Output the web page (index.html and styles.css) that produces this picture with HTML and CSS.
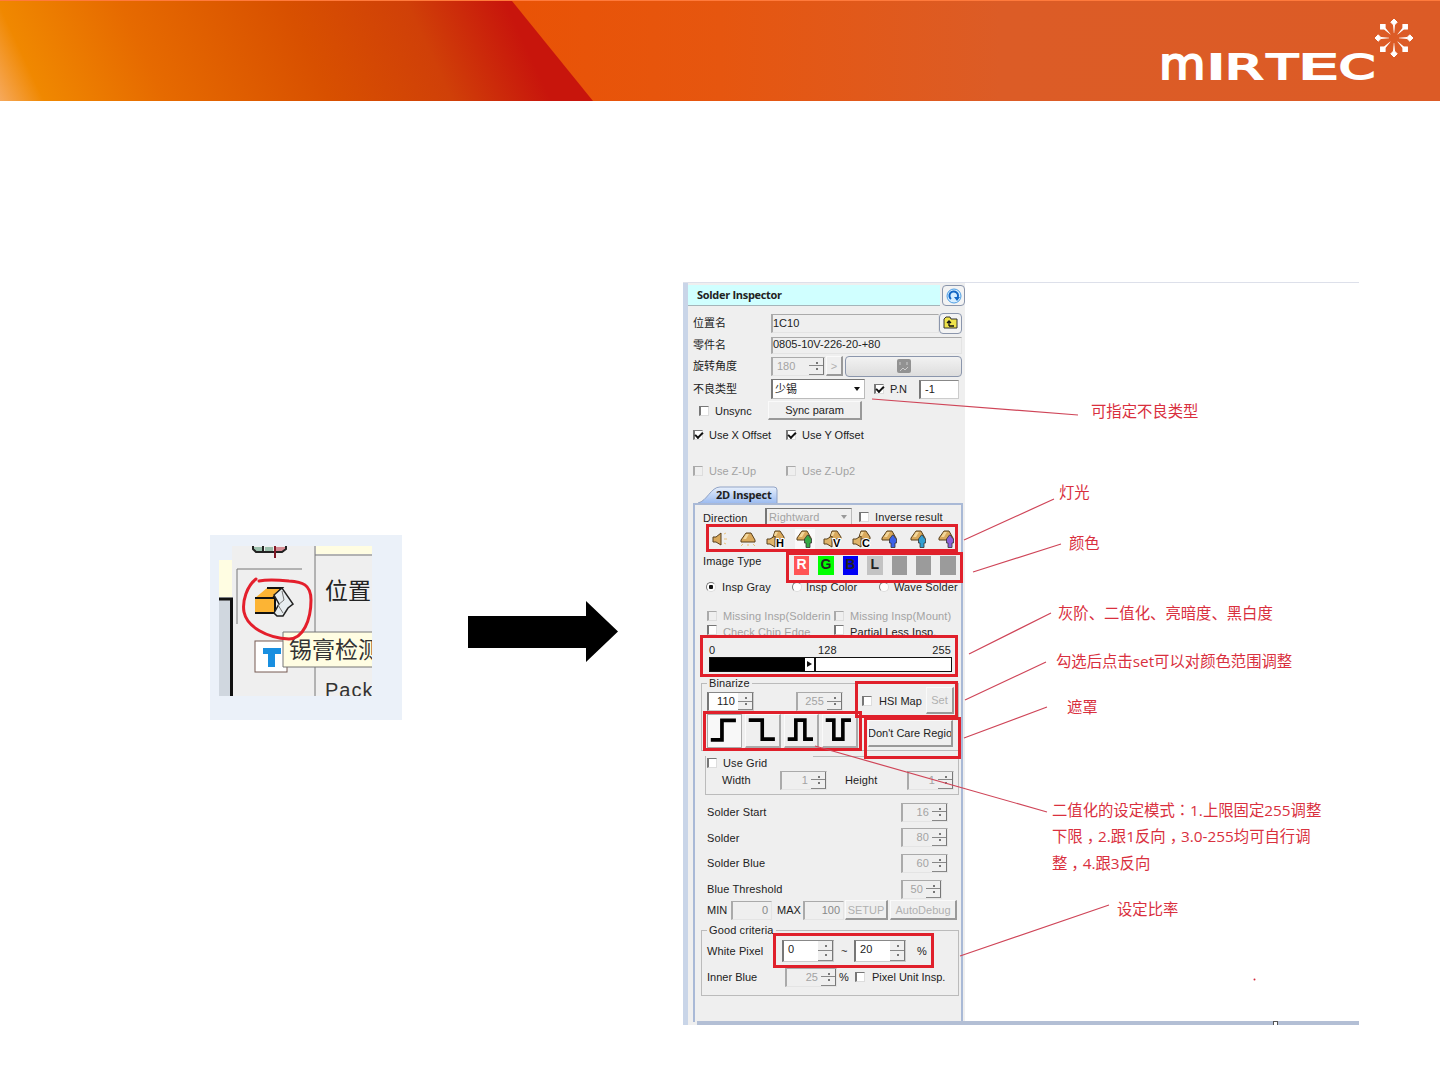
FILE: index.html
```html
<!DOCTYPE html>
<html lang="zh">
<head>
    <meta charset="UTF-8">
    <title>MIRTEC - Solder Inspector</title>
    <link rel="stylesheet" href="styles.css">
</head>
<body>
    <svg class="defs" width="0" height="0">
        <symbol id="lamp" viewBox="0 0 20 20">
            <path d="M8 4h5l4 7v2H3v-2z" fill="#d9a95c" stroke="#59401c"/>
            <path d="M8 5h3l-3 5H5z" fill="#f3d79b"/>
        </symbol>
        <symbol id="lamp-pair" viewBox="0 0 20 20">
            <path d="M9 2h5l4 6v2H7V8z" fill="#d9a95c" stroke="#59401c"/>
            <path d="M9 7v11l-5-3H1v-5h3z" fill="#e0b56a" stroke="#59401c"/>
            <path d="M9 3h3l-2 4H8z" fill="#f3d79b"/>
        </symbol>
        <symbol id="man" viewBox="0 0 20 20">
            <path d="M7 2h5l4 7v2H2V9z" fill="#d9a95c" stroke="#59401c"/>
            <path d="M7 3h3L7 8H4z" fill="#f3d79b"/>
            <path d="M12.500 6a2 2 0 0 1 2 2l2 2v4h-1.500v4.500h-4V14H9.500v-4l1.500-2z" stroke="#333" stroke-width=".8"/>
        </symbol>
    </svg>

    <header class="banner">
        <svg class="logo" width="260" height="80" viewBox="0 0 260 80">
            <text class="logo-text" y="66" font-size="34"><tspan x="-1" font-size="45" textLength="46.500" lengthAdjust="spacingAndGlyphs">m</tspan><tspan x="46.500" textLength="19" lengthAdjust="spacingAndGlyphs">I</tspan><tspan x="65" textLength="38" lengthAdjust="spacingAndGlyphs">R</tspan><tspan x="107" textLength="30.700" lengthAdjust="spacingAndGlyphs">T</tspan><tspan x="138.500" textLength="40" lengthAdjust="spacingAndGlyphs">E</tspan><tspan x="179" textLength="36" lengthAdjust="spacingAndGlyphs">C</tspan></text>
            <g fill="#fff" stroke="#fff">
                <g id="ray"><path d="M234 6l3.200 3.200-3.200 3.200-3.200-3.200z"/><path d="M233 12h2l-.8 8h-.4z" stroke="none"/></g>
                <use href="#ray" transform="rotate(45 234 25)"/>
                <use href="#ray" transform="rotate(90 234 25)"/>
                <use href="#ray" transform="rotate(135 234 25)"/>
                <use href="#ray" transform="rotate(180 234 25)"/>
                <use href="#ray" transform="rotate(225 234 25)"/>
                <use href="#ray" transform="rotate(270 234 25)"/>
                <use href="#ray" transform="rotate(315 234 25)"/>
            </g>
        </svg>
    </header>

    <main class="slide">
        <!-- toolbar close-up -->
        <svg class="closeup" width="192" height="185" viewBox="0 0 192 185">
            <rect width="192" height="185" fill="#ebf1f9"/>
            <rect x="22" y="11" width="140" height="150" fill="#efefef"/>
            <rect x="9" y="25" width="13" height="37" fill="#fffde2"/>
            <rect x="9" y="64" width="13" height="97" fill="#d0d7df"/>
            <path d="M9 64h12.500v97" fill="none" stroke="#111" stroke-width="3"/>
            <path d="M27 89V34h65M105 11v150" fill="none" stroke="#777"/>
            <rect x="106" y="11" width="56" height="8" fill="#fffde2"/>
            <path d="M105 20h57" stroke="#777"/>
            <path d="M44 12v4h10v-4zM55 12v4h8v-4z" fill="#9bc0ad"/>
            <path d="M64 12h11v4H64z" fill="#d58b94"/>
            <path d="M43 11v3l3 3h26l4-3v-3M53 11v6" fill="none" stroke="#222" stroke-width="2"/>
            <path d="M65 11v12" stroke="#801725" stroke-width="2"/>
            <path d="M45 63l12-10h16l-8 10v16H45z" fill="#fcb434"/>
            <path d="M45 63h20v15M57 53h15l-9 10M45 78h20" fill="none" stroke="#111" stroke-width="2"/>
            <path d="M64 60l8-7 11 16-5 4-5 8h-6l-3-3 5-9z" fill="#e7edf0" stroke="#222" stroke-width="1.500"/>
            <path d="M72 56l2 9-6 5 5 8" fill="none" stroke="#777"/>
            <rect x="45" y="106" width="32" height="31" fill="#fff" stroke="#765a52"/>
            <path d="M53 113h18v6h-6v13h-7v-13h-5z" fill="#198fe0"/>
            <rect x="73" y="97" width="89" height="35" fill="#fffde2"/>
            <path d="M162 97H73v35h89" fill="none" stroke="#777"/>
            <svg x="0" y="0" width="162" height="161">
                <text x="115" y="64" font-size="23" fill="#222">位置</text>
                <text x="79" y="123" font-size="23" fill="#333">锡膏检测</text>
                <text x="115" y="162" font-size="20" letter-spacing="1" fill="#333">Pack</text>
            </svg>
            <path d="M46 44c-9 7-14 22-12 33 3 15 23 26 45 27 14 0 22-19 22-39 0-16-9-18-22-19-10-1-20-2-30 0" fill="none" stroke="#e41f2c" stroke-width="3" stroke-linecap="round"/>
        </svg>

        <svg class="arrow" width="151" height="61" viewBox="0 0 151 61">
            <path d="M1 15h118V0l32 30.500L119 61V47H1z"/>
        </svg>

        <section class="figure">
            <div class="panel">
                <div class="title-row">
                    <div class="title">Solder Inspector</div>
                    <button class="round-btn">
                        <svg width="16" height="16" viewBox="0 0 16 16"><circle cx="8" cy="8" r="7" fill="#d6edff" stroke="#4c9de4"/><path d="M5 11a4.300 4.300 0 1 1 6-.5" fill="none" stroke="#1467c5" stroke-width="2"/><path d="M8 9h6l-3 4z" fill="#1467c5"/></svg>
                    </button>
                </div>
                <div class="row name-row">
                    <span>位置名</span><span class="field">1C10</span>
                    <button class="round-btn">
                        <svg width="16" height="14" viewBox="0 0 16 14"><path d="M1 3l2-2h4l1 2h6v9H1z" fill="#efe34b" stroke="#333"/><path d="M6 10h5M6 10V5M4 7l2-2 2 2" fill="none" stroke="#111" stroke-width="1.300"/></svg>
                    </button>
                </div>
                <div class="row part-row"><span>零件名</span><span class="field">0805-10V-226-20-+80</span></div>
                <div class="row angle-row">
                    <span>旋转角度</span><span class="spin off left">180<i></i></span><button class="btn off">&gt;</button>
                    <button class="round-btn wide">
                        <svg width="14" height="14" viewBox="0 0 14 14"><rect width="14" height="14" rx="2" fill="#929292"/><path d="M3 3v3M10 3v3M3 12l3-3 2 2 3-3" stroke="#ccc" fill="none"/></svg>
                    </button>
                </div>
                <div class="row type-row">
                    <span>不良类型</span><span class="select">少锡<b></b></span>
                    <span class="check on"></span><span>P.N</span><span class="field white">-1</span>
                </div>
                <div class="row sync-row"><span class="check"></span><span>Unsync</span><button class="btn">Sync param</button></div>
                <div class="row offset-row"><span class="check on"></span><span>Use X Offset</span><span class="check on"></span><span>Use Y Offset</span></div>
                <div class="row offset-row zup off"><span class="check"></span><span>Use Z-Up</span><span class="check"></span><span>Use Z-Up2</span></div>

                <div class="tab">
                    <svg width="80" height="17" viewBox="0 0 80 17"><defs><linearGradient id="tabfill" x2="0" y2="1"><stop stop-color="#e8f0fc"/><stop offset="1" stop-color="#9dbcf0"/></linearGradient></defs><path d="M0 17C9 15 13 1 22 1h54q3 0 3 3v13" fill="url(#tabfill)" stroke="#91a3c5"/></svg>
                    <span>2D Inspect</span>
                </div>
                <div class="tab-body">
                    <div class="row dir-row">
                        <span class="dir">Direction</span><span class="select off">Rightward<b></b></span><span class="check"></span><span>Inverse result</span>
                    </div>
                    <div class="mark lights">
                        <svg viewBox="0 0 20 20"><path d="M12 4v12l-5-3H4V8h3z" fill="#d9a95c" stroke="#59401c"/><path d="M15 5l2-1M15 10h3M15 14l2 1" stroke="#e7c07c"/></svg>
                        <svg viewBox="0 0 20 20"><use href="#lamp"/><path d="M5 15l-2 2M10 15v2M15 15l2 2" stroke="#e7c07c"/></svg>
                        <svg viewBox="0 0 20 20"><use href="#lamp-pair"/><text x="10" y="18">H</text></svg>
                        <svg class="pressed" viewBox="0 0 20 20"><use href="#man" fill="#36a844"/></svg>
                        <svg viewBox="0 0 20 20"><use href="#lamp-pair"/><text x="10" y="18">V</text></svg>
                        <svg viewBox="0 0 20 20"><use href="#lamp-pair"/><text x="10" y="18">C</text></svg>
                        <svg viewBox="0 0 20 20"><use href="#man" fill="#3c62e8"/></svg>
                        <svg viewBox="0 0 20 20"><use href="#man" fill="#339ed0"/></svg>
                        <svg viewBox="0 0 20 20"><use href="#man" fill="#8a62d8"/></svg>
                    </div>
                    <div class="image-row">
                        <span>Image Type</span>
                        <div class="mark swatches">
                            <b class="r">R</b><b class="g">G</b><b class="b">B</b><b class="l">L</b><b></b><b></b><b></b>
                        </div>
                    </div>
                    <div class="row radio-row">
                        <span class="radio on"></span><span>Insp Gray</span><span class="radio"></span><span>Insp Color</span><span class="radio"></span><span>Wave Solder</span>
                    </div>
                    <div class="row opt-row off"><span class="check"></span><span class="clip">Missing Insp(Solderin</span><span class="check"></span><span>Missing Insp(Mount)</span></div>
                    <div class="row opt-row cut"><span class="check"></span><span class="off">Check Chip Edge</span><span class="check"></span><span>Partial Less Insp.</span></div>
                    <div class="mark slider">
                        <div class="scale"><span>0</span><span class="mid-tick">128</span><span>255</span></div>
                        <div class="bar"><i></i><b></b></div>
                    </div>

                    <div class="group binarize">
                        <span class="legend">Binarize</span>
                        <div class="bin-left">
                            <div class="bin-spins"><span class="spin white">110<i></i></span><span class="spin off">255<i></i></span></div>
                            <div class="mark modes">
                                <svg class="pressed" viewBox="0 0 36 33"><path d="M3 26h12V5h15"/></svg>
                                <svg viewBox="0 0 36 33"><path d="M3 5h15v21h14"/></svg>
                                <svg viewBox="0 0 36 33"><path d="M3 26h9V5h10v21h9"/></svg>
                                <svg viewBox="0 0 36 33"><path d="M3 5h9v21h10V5h9"/></svg>
                            </div>
                        </div>
                        <div class="bin-right">
                            <div class="mark hsi"><span class="check"></span><span>HSI Map</span><button class="btn off">Set</button></div>
                            <div class="mark care"><button class="btn"><span>Don't Care Regio</span></button></div>
                        </div>
                    </div>

                    <div class="group use-grid">
                        <div class="row ug-head"><span class="check"></span><span>Use Grid</span></div>
                        <div class="row ug-size"><span>Width</span><span class="spin off">1<i></i></span><span>Height</span><span class="spin off">1<i></i></span></div>
                    </div>

                    <div class="row solder-row"><span>Solder Start</span><span class="spin off">16<i></i></span></div>
                    <div class="row solder-row"><span>Solder</span><span class="spin off">80<i></i></span></div>
                    <div class="row solder-row"><span>Solder Blue</span><span class="spin off">60<i></i></span></div>
                    <div class="row solder-row narrow"><span>Blue Threshold</span><span class="spin off">50<i></i></span></div>
                    <div class="row min-row">
                        <span>MIN</span><span class="field num">0</span><span>MAX</span><span class="field num">100</span>
                        <button class="btn off">SETUP</button><button class="btn off">AutoDebug</button>
                    </div>

                    <div class="group good">
                        <span class="legend">Good criteria</span>
                        <div class="white-row">
                            <span>White Pixel</span>
                            <div class="mark range">
                                <span class="spin white left">0<i></i></span><span>~</span><span class="spin white left">20<i></i></span><span>%</span>
                            </div>
                        </div>
                        <div class="row inner-row"><span>Inner Blue</span><span class="spin off">25<i></i></span><span>%</span><span class="check"></span><span>Pixel Unit Insp.</span></div>
                    </div>
                </div>
            </div>
            <div class="bottom-strip"><i></i></div>

            <!-- leader lines -->
            <svg class="leaders" width="676" height="743" viewBox="683 282 676 743">
                <path d="M872 399L1078 415M964 540L1054 499M973 572L1061 544M969 654L1051 613M965 700L1046 662M964 738L1047 707M815 746L1047 812M960 956L1109 905"/>
                <circle cx="1254.500" cy="979.500" r="1"/>
            </svg>
            <p class="note n1">可指定不良类型</p>
            <p class="note n2">灯光</p>
            <p class="note n3">颜色</p>
            <p class="note n4">灰阶、二值化、亮暗度、黑白度</p>
            <p class="note n5">勾选后点击set可以对颜色范围调整</p>
            <p class="note n6">遮罩</p>
            <p class="note n7">二值化的设定模式<span class="colon" lang="zh-TW">：</span>1.上限固定255调整<br>下限<span class="comma">，</span>2.跟1反向<span class="comma">，</span>3.0-255均可自行调<br>整<span class="comma">，</span>4.跟3反向</p>
            <p class="note n8">设定比率</p>
        </section>
    </main>
</body>
</html>
```
FILE: styles.css
```css
* {
    box-sizing: border-box;
}
body {
    margin: 0;
    width: 1440px;
    height: 1080px;
    overflow: hidden;
    background: #fff;
    font-family: "Liberation Sans", "Noto Sans CJK SC", sans-serif;
    color: #222;
}
.defs {
    position: absolute;
}

/* banner */
.banner {
    height: 101px;
    display: flex;
    justify-content: flex-end;
    position: relative;
    border-top: 1px solid #ff7a3c;
    background: linear-gradient(90deg, #e95306 520px, #e6560f 720px, #dc5c26 1000px, #dc5b26);
}
.banner::before {
    content: "";
    position: absolute;
    top: 0;
    left: 0;
    width: 593px;
    height: 100px;
    clip-path: polygon(0 0, 512px 0, 593px 100%, 0 100%);
    background:
        linear-gradient(65deg, #f6a95c 0, rgba(242, 145, 30, 0) 40px),
        linear-gradient(65deg, #f08800 40px, #e66a00 150px, #d85000 300px, #d04008 410px, #c8150c 500px);
}
.logo {
    margin: 12px 20px 0 0;
    overflow: visible;
}
.logo-text {
    fill: #fff;
    stroke: #fff;
    stroke-width: 2px;
    font-family: "DejaVu Sans", sans-serif;
}

.slide {
    display: flex;
    align-items: flex-start;
}
.closeup {
    margin: 434px 0 0 210px;
}
.arrow {
    margin: 500px 0 0 65px;
}
.figure {
    position: relative;
    margin: 181px 0 0 65px;
    width: 676px;
    height: 743px;
    border-top: 1px solid #dde0ea;
    font-size: 11px;
    line-height: 14px;
}

/* inspector panel */
.panel {
    width: 282px;
    height: 742px;
    padding: 2px 0 0 5px;
    background: #efefef;
    border-left: 5px solid #c9d5e8;
    white-space: nowrap;
}
.title-row {
    display: flex;
    gap: 2px;
    height: 21px;
    margin: 0 0 6px -5px;
}
.title {
    width: 253px;
    padding: 3px 9px;
    background: #d0ffff;
    border-bottom: 1px solid #a5b5ba;
    font-family: "Open Sans", sans-serif;
    font-size: 11px;
    font-weight: bold;
    letter-spacing: -.3px;
}
.row {
    display: grid;
    align-items: center;
}
.name-row {
    grid-template-columns: 78px 168px 24px;
    height: 22px;
    margin-bottom: 1px;
}
.part-row {
    grid-template-columns: 78px 191px;
    height: 20px;
}
.angle-row {
    grid-template-columns: 78px 55px 19px 117px;
    height: 22px;
}
.type-row {
    grid-template-columns: 78px 103px 16px 29px 40px;
    height: 22px;
    margin-top: 1px;
}
.type-row .select {
    width: 94px;
    height: 20px;
    background: #fff;
}
.sync-row {
    grid-template-columns: 16px 53px 94px;
    height: 19px;
    margin-top: 1px;
    padding-left: 6px;
}
.offset-row {
    grid-template-columns: 16px 77px 16px auto;
    height: 15px;
    margin-top: 7px;
}
.zup {
    margin-top: 21px;
}
.off,
.off > span {
    color: #a3a3a3;
}

/* controls */
.field,
.spin,
.select {
    display: block;
    height: 19px;
    border: 1px solid #e4e4e4;
    border-top-color: #aaa;
    border-left: 2px solid #aaa;
    line-height: 16px;
}
.part-row .field {
    height: 17px;
    line-height: 13px;
}
.white {
    background: #fff;
    border-color: #888 #ccc #ccc #777;
}
.field.white {
    padding-left: 4px;
}
.num {
    text-align: right;
    padding-right: 3px;
    color: #888;
}
.spin {
    display: flex;
    justify-content: flex-end;
    width: 47px;
    gap: 3px;
}
.spin.left {
    justify-content: space-between;
    padding-left: 4px;
}
.angle-row .spin {
    width: 54px;
}
/* up and down halves of the spinner */
.spin i {
    width: 15px;
    height: 100%;
    background:
        linear-gradient(#777, #777) 7px 4px / 2px 2px no-repeat,
        linear-gradient(#777, #777) 7px calc(100% - 4px) / 2px 2px no-repeat,
        linear-gradient(#888, #888) 0 50% / 100% 1px no-repeat,
        #efefef;
    border-right: 1px solid #777;
    border-bottom: 1px solid #888;
}
.select {
    display: flex;
    justify-content: space-between;
    align-items: center;
    padding: 0 4px 0 2px;
    border-color: #777 #bbb #bbb #777;
}
.select b {
    border: 3px solid transparent;
    border-top: 4px solid #111;
    border-bottom: 0;
}
.select.off b {
    border-top-color: #999;
}
.check {
    width: 10px;
    height: 10px;
    background: #fff;
    border: 1px solid #ddd;
    border-top: 1px solid #777;
    border-left: 2px solid #777;
}
.check.on::after {
    content: "";
    display: block;
    width: 6px;
    height: 3px;
    margin: 1px 0 0;
    border: solid #111;
    border-width: 0 0 2px 2px;
    transform: rotate(-45deg);
}
.off .check {
    background: #efefef;
    border-top-color: #aaa;
    border-left-color: #aaa;
}
.radio {
    width: 10px;
    height: 10px;
    border-radius: 50%;
    background: #fff;
    border: 1px solid #ddd;
    border-top-color: #777;
    border-left-color: #777;
}
.radio.on {
    background: radial-gradient(#111 2px, #fff 2.5px);
}
.btn {
    height: 100%;
    padding: 0;
    font: inherit;
    color: #222;
    background: #efefef;
    border: 1px solid #fafafa;
    border-right: 2px solid #999;
    border-bottom: 2px solid #999;
    overflow: hidden;
}
.btn.off {
    color: #b0b0b0;
}
.angle-row .btn {
    height: 20px;
    width: 17px;
}
.round-btn {
    display: flex;
    align-items: center;
    justify-content: center;
    width: 23px;
    height: 21px;
    padding: 0;
    background: #f3f3f3;
    border: 1px solid #8b96ac;
    border-radius: 4px;
}
.round-btn.wide {
    width: 117px;
    background: linear-gradient(#f2f2f2, #ddd);
}

/* tab */
.tab {
    position: relative;
    height: 17px;
    margin: 8px 0 0 5px;
}
.tab svg {
    display: block;
}
.tab span {
    position: absolute;
    left: 18px;
    top: 2px;
    font-family: "Open Sans", sans-serif;
    font-weight: bold;
    letter-spacing: -.2px;
}
.tab-body {
    width: 270px;
    height: 519px;
    padding: 3px 0 0 5px;
    border: 2px solid #a9b9d6;
    border-bottom: 0;
    letter-spacing: .12px;
}
.dir-row {
    grid-template-columns: 62px 94px 16px auto;
    height: 16px;
    padding-left: 3px;
}
.dir-row .select {
    width: 87px;
    height: 17px;
}
.dir {
    padding-top: 3px;
}
.mark {
    position: relative;
    border: 3px solid #e0202b;
}
.lights {
    display: flex;
    align-items: center;
    gap: 8.500px;
    width: 252px;
    height: 28px;
    margin-left: 6px;
    padding: 2px 0 0;
    background: #efefef;
}
.lights svg {
    flex: none;
    width: 20px;
    height: 20px;
}
.lights .pressed {
    background: #fafafa;
}
.lights text {
    font-size: 11px;
    font-weight: bold;
    stroke: #fff;
    stroke-width: 2px;
    paint-order: stroke;
}
.image-row {
    display: flex;
    height: 28px;
    padding: 2px 0 0 3px;
}
.image-row > span {
    flex: none;
    width: 83px;
}
.swatches {
    display: flex;
    flex: none;
    gap: 9px;
    width: 177px;
    height: 31px;
    margin-top: -2px;
    padding: 1px 0 0 5px;
}
.swatches b {
    flex: none;
    width: 15.400px;
    height: 19px;
    background: #9b9b9b;
    font-size: 14px;
    line-height: 17px;
    text-align: center;
}
.swatches .r {
    background: #ff5555;
    color: #fff;
}
.swatches .g {
    background: #00ff00;
}
.swatches .b {
    background: #0000f5;
}
.swatches .l {
    background: #c3c3c3;
}
.radio-row {
    grid-template-columns: 16px 70px 14px 73px 15px auto;
    height: 14px;
    padding-left: 6px;
}
.opt-row {
    grid-template-columns: 16px 111px 16px auto;
    height: 14px;
    margin-top: 15px;
    padding-left: 7px;
}
.clip {
    width: 108px;
    overflow: hidden;
}
/* second option row runs under the slider frame */
.cut {
    height: 10px;
    margin-top: 2px;
    align-items: start;
}
.slider {
    width: 258px;
    height: 42px;
    padding: 5px 4px 0 6px;
    background: #efefef;
}
.scale {
    display: flex;
    justify-content: space-between;
    height: 14px;
}
.mid-tick {
    padding-left: 7px;
}
.bar {
    display: flex;
    align-items: center;
    width: 243px;
    height: 15px;
    background: #fff;
    border: 1px solid #111;
}
.bar i {
    width: 95px;
    height: 100%;
    background: #000;
}
.bar b {
    width: 11px;
    height: 100%;
    border-right: 2px solid #111;
    background: #fff;
}
.bar b::after {
    content: "";
    display: block;
    margin: 3px 0 0 2px;
    border: 3.500px solid transparent;
    border-left: 5px solid #111;
    border-right: 0;
}

.group {
    position: relative;
    border: 1px solid #bbb;
}
.legend {
    position: absolute;
    top: -7px;
    left: 5px;
    padding: 0 2px;
    line-height: 13px;
    background: #efefef;
}
.binarize {
    display: flex;
    width: 258px;
    height: 68px;
    margin: 6px 0 0 1px;
}
.bin-left {
    width: 160px;
}
.bin-spins {
    display: flex;
    gap: 42px;
    padding: 8px 0 0 5px;
    height: 27px;
}
.modes {
    display: flex;
    gap: 3px;
    width: 159px;
    height: 40px;
    margin-left: 1px;
    padding: 0 1px;
    background: #efefef;
}
.modes svg {
    width: 36px;
    height: 34px;
    fill: none;
    stroke: #000;
    stroke-width: 4px;
    border: 1px solid #fafafa;
    border-right: 2px solid #aaa;
    border-bottom: 2px solid #aaa;
}
.modes .pressed {
    background: #f8f8f8;
    border: 1px solid #aaa;
}
.hsi {
    display: grid;
    grid-template-columns: 17px 47px 28px;
    align-items: center;
    width: 103px;
    height: 37px;
    margin: -3px 0 0 -7px;
    padding: 3px 0 1px 4px;
    letter-spacing: 0;
}
.care {
    z-index: 1;
    width: 97px;
    height: 42px;
    margin: -1px 0 0 2px;
    padding: 0 5px 9px 1px;
}
.care .btn {
    display: flex;
    align-items: center;
    justify-content: center;
    width: 85px;
    font-size: 11px;
    letter-spacing: 0;
}
.use-grid {
    width: 254px;
    height: 39px;
    margin: 5px 0 0 5px;
    border-top: 0;
}
.use-grid::before {
    content: "";
    position: absolute;
    top: 0;
    right: 0;
    width: 145px;
    border-top: 1px solid #bbb;
}
.ug-head {
    grid-template-columns: 16px auto;
    height: 14px;
    padding-left: 1px;
}
.ug-size {
    grid-template-columns: 58px 65px 62px auto;
    height: 20px;
    padding-left: 16px;
}
.solder-row {
    grid-template-columns: 194px auto;
    height: 20px;
    margin-top: 5.700px;
    padding-left: 7px;
}
.use-grid + .solder-row {
    margin-top: 7px;
}
.narrow .spin {
    width: 41px;
}
.min-row {
    grid-template-columns: 24px 46px 26px 42px 45px 67px;
    height: 20px;
    margin-top: 1px;
    padding-left: 7px;
    letter-spacing: 0;
}
.min-row .field {
    width: 41px;
}
.min-row .btn:nth-of-type(1) {
    width: 43px;
}
.good {
    width: 258px;
    height: 66px;
    margin: 10px 0 0 1px;
}
.white-row {
    display: flex;
    height: 36px;
    padding: 2px 0 0 5px;
}
.white-row > span {
    width: 66px;
    padding-top: 11px;
}
.range {
    display: grid;
    grid-template-columns: 59px 13px 63px auto;
    align-items: center;
    width: 161px;
    height: 35px;
    padding-left: 6px;
}
.range .spin {
    width: 52px;
    height: 22px;
}
.inner-row {
    grid-template-columns: 78px 54px 16px 17px auto;
    height: 20px;
    padding-left: 5px;
    letter-spacing: 0;
}
.inner-row .spin {
    width: 52px;
}

.bottom-strip {
    position: absolute;
    left: 14px;
    right: 0;
    bottom: 0;
    height: 4px;
    background: #b3bfd5;
}
.bottom-strip i {
    display: block;
    width: 5px;
    height: 4px;
    margin-left: 576px;
    background: #fff;
    border: 1px solid #555;
    border-bottom: 0;
}

/* red notes */
.leaders {
    position: absolute;
    top: -1px;
    left: 0;
    fill: #d32a3c;
}
.leaders path {
    fill: none;
    stroke: #cf4558;
    stroke-width: 1.200px;
}
.note {
    position: absolute;
    margin: 0;
    color: #d9303e;
    font-family: "Open Sans", "Noto Sans CJK SC", sans-serif;
    font-size: 15.350px;
    line-height: 26.400px;
    white-space: nowrap;
}
.colon {
    font-family: "Noto Sans CJK TC", sans-serif;
    line-height: 1;
}
.comma {
    position: relative;
    left: 4px;
}
.n1 { left: 408px; top: 115px; }
.n2 { left: 376px; top: 196px; }
.n3 { left: 386px; top: 247px; }
.n4 { left: 375px; top: 317px; }
.n5 { left: 373px; top: 365px; }
.n6 { left: 384px; top: 411px; }
.n7 { left: 369px; top: 514px; }
.n8 { left: 434px; top: 613px; }
```
